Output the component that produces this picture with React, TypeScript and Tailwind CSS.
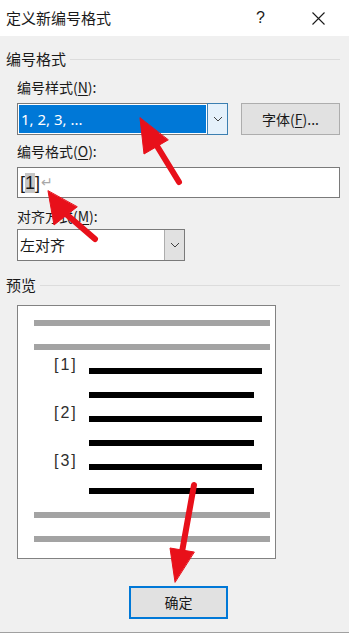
import React from 'react'

const cjk = { fontFamily: '"Noto Sans CJK SC", "Noto Sans", sans-serif' }

const Chevron = () => (
  <svg width="10" height="6" viewBox="0 0 10 6" fill="none">
    <path d="M1 1 L5 5 L9 1" stroke="#404040" strokeWidth="1" />
  </svg>
)

// Windows style label with an underlined access key
const Label = ({ text, hotkey }: { text: string; hotkey: string }) => (
  <div className="h-[20px] pl-[17px] flex items-center text-[14px] leading-[20px] text-[#1a1a1a]">
    <span>{text}(</span>
    <span className="underline underline-offset-2">{hotkey}</span>
    <span>):</span>
  </div>
)

const Heading = ({ text }: { text: string }) => (
  <div className="h-[20px] pl-[6px] pr-[9px] flex items-center gap-[4px] text-[15px] leading-[20px] text-[#1a1a1a]">
    <span>{text}</span>
    <div className="flex-1 h-px bg-[#dcdcdc]" />
  </div>
)

const GreyBar = () => <div className="ml-[16px] w-[236px] h-[6px] bg-[#a3a3a3]" />

const NumberedItem = ({ n }: { n: number }) => (
  <>
    <div className="relative h-[6px]">
      <span
        className="absolute left-[36px] top-[-13px] text-[16px] leading-[20px] text-[#2e2e2e] tracking-[2px]"
        style={{ fontFamily: '"Liberation Sans", sans-serif' }}
      >
        [{n}]
      </span>
      <div className="ml-[71px] w-[173px] h-[6px] bg-black" />
    </div>
    <div className="ml-[71px] w-[165px] h-[6px] bg-black" />
  </>
)

export default function App() {
  return (
    <div className="relative w-[349px] h-[633px] flex flex-col bg-[#f0f0f0] overflow-hidden" style={cjk}>
      {/* Title bar */}
      <div className="h-[36px] bg-white flex items-center pl-[6px]">
        <span className="text-[15px] leading-[20px] text-[#1a1a1a]">定义新编号格式</span>
        <span className="ml-auto text-[16px] leading-[20px] text-[#1a1a1a]" style={{ fontFamily: '"Liberation Sans", sans-serif' }}>
          ?
        </span>
        <svg className="ml-[47px] mr-[24px]" width="13" height="13" viewBox="0 0 13 13">
          <path d="M0.5 0.5 L12.5 12.5 M12.5 0.5 L0.5 12.5" stroke="#1a1a1a" strokeWidth="1.1" />
        </svg>
      </div>

      <div className="flex-1 flex flex-col">
        <div className="mt-[13px]">
          <Heading text="编号格式" />
        </div>

        <div className="mt-[8px]">
          <Label text="编号样式" hotkey="N" />
        </div>

        {/* Number style combo + font button */}
        <div className="mt-[6px] flex items-stretch h-[32px]">
          <div className="ml-[17px] w-[211px] flex border border-[#7a7a7a] bg-white">
            <div className="flex-1 m-[1px] bg-[#0078d7] flex items-center pl-[2px] text-[15px] text-white" style={{ fontFamily: '"Noto Sans", sans-serif' }}>
              1, 2, 3, ...
            </div>
            <div className="w-[21px] -my-px -mr-px border border-[#3c7fb1] bg-[#e5f1fb] flex items-center justify-center">
              <Chevron />
            </div>
          </div>
          <div className="ml-[13px] w-[99px] border border-[#adadad] bg-[#e1e1e1] flex items-center justify-center text-[14px] text-[#1a1a1a]">
            <span>字体(</span>
            <span className="underline underline-offset-2">F</span>
            <span>)...</span>
          </div>
        </div>

        <div className="mt-[6px]">
          <Label text="编号格式" hotkey="O" />
        </div>

        {/* Number format text box */}
        <div className="mt-[6px] ml-[17px] w-[323px] h-[31px] border border-[#7a7a7a] bg-white flex items-center pl-[2px]">
          <span className="text-[18px] leading-[20px] text-[#1a1a1a]" style={{ fontFamily: '"Liberation Sans", sans-serif' }}>
            [<span className="bg-[#c6c6c6]">1</span>]
          </span>
          <span className="text-[14px] text-[#a8a8a8] ml-px" style={{ fontFamily: '"DejaVu Sans", sans-serif' }}>↵</span>
        </div>

        <div className="mt-[8px]">
          <Label text="对齐方式" hotkey="M" />
        </div>

        {/* Alignment combo */}
        <div className="mt-[3px] ml-[17px] w-[168px] h-[32px] flex border border-[#7a7a7a] bg-white">
          <div className="flex-1 flex items-center pl-[2px] text-[15px] text-[#1a1a1a]">左对齐</div>
          <div className="w-[20px] border-l border-[#adadad] bg-[#e1e1e1] flex items-center justify-center">
            <Chevron />
          </div>
        </div>

        <div className="mt-[14px]">
          <Heading text="预览" />
        </div>

        {/* Preview */}
        <div className="mt-[10px] ml-[17px] w-[259px] h-[254px] border border-[#828282] bg-white pt-[14px] flex flex-col gap-[18px]">
          <GreyBar />
          <GreyBar />
          <NumberedItem n={1} />
          <NumberedItem n={2} />
          <NumberedItem n={3} />
          <GreyBar />
          <GreyBar />
        </div>

        {/* OK button */}
        <div className="mt-[27px] ml-[129px] w-[99px] h-[33px] border-2 border-[#0078d7] bg-[#e1e1e1] flex items-center justify-center text-[14px] text-[#1a1a1a]">
          确定
        </div>

        <div className="mt-auto h-px bg-[#a0a0a0]" />
      </div>

      {/* Red annotation arrows */}
      <svg className="absolute inset-0 pointer-events-none" width="349" height="633" viewBox="0 0 349 633">
        <g fill="#e8101a" stroke="#e8101a" strokeLinecap="round" strokeLinejoin="round">
          <line x1="179" y1="182" x2="157" y2="146" strokeWidth="6" />
          <polygon points="140,118 144,154 168,140" strokeWidth="1" />
          <line x1="95" y1="239" x2="66" y2="214" strokeWidth="6" />
          <polygon points="48,191 54,225 77,207" strokeWidth="1" />
          <line x1="194" y1="485" x2="182" y2="552" strokeWidth="6" />
          <polygon points="175,582 170,548 194,552" strokeWidth="1" />
        </g>
      </svg>
    </div>
  )
}
